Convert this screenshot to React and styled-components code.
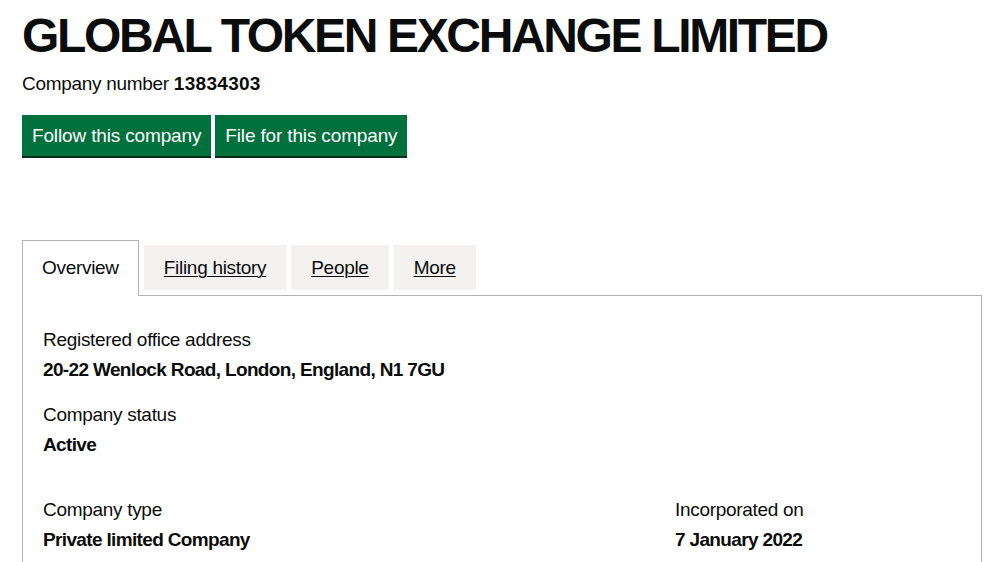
import styled, { createGlobalStyle } from "styled-components";

const GlobalStyle = createGlobalStyle`
  html, body {
    margin: 0;
    padding: 0;
    background: #ffffff;
  }
  body {
    font-family: "Liberation Sans", Arial, sans-serif;
    color: #0b0c0c;
    letter-spacing: -0.3px;
    -webkit-font-smoothing: antialiased;
  }
`;

const Page = styled.main`
  max-width: 960px;
  margin: 0 auto;
  padding-top: 11px;
`;

const Heading = styled.h1`
  margin: 0;
  font-size: 48px;
  line-height: 50px;
  font-weight: 700;
  letter-spacing: -2.35px;
`;

const Lead = styled.p`
  margin: 10px 0 19px;
  font-size: 19px;
  line-height: 25px;

  strong {
    font-weight: 700;
    letter-spacing: 0.3px;
  }
`;

const ButtonRow = styled.div`
  display: flex;
  gap: 4px;
  margin-bottom: 84px;
`;

const Button = styled.a`
  display: inline-block;
  padding: 9px 10px 9px;
  background: #00703c;
  color: #ffffff;
  font-size: 19px;
  line-height: 23px;
  letter-spacing: -0.15px;
  text-decoration: none;
  box-shadow: 0 2px 0 #002d18;
  cursor: pointer;
`;

const TabList = styled.ul`
  display: flex;
  align-items: flex-start;
  list-style: none;
  margin: 0;
  padding: 0;
`;

const Tab = styled.li`
  margin: ${(p) => (p.$selected ? "0 5px -1px 0" : "5px 5px 0 0")};
  padding: ${(p) => (p.$selected ? "14px 19px 16px" : "10px 20px")};
  background: ${(p) => (p.$selected ? "#ffffff" : "#f3f2f1")};
  border: ${(p) => (p.$selected ? "1px solid #b1b4b6" : "0")};
  border-bottom: 0;
  position: relative;
  font-size: 19px;
  line-height: 25px;

  a {
    color: #0b0c0c;
    text-decoration: ${(p) => (p.$selected ? "none" : "underline")};
    text-underline-offset: 2px;
    text-decoration-thickness: 1px;
  }
`;

const Panel = styled.section`
  border: 1px solid #b1b4b6;
  padding: 31px 20px 20px;
`;

const Row = styled.div`
  display: flex;
  margin: 0 -15px;
`;

const Column = styled.div`
  box-sizing: border-box;
  width: ${(p) => p.$width};
  padding: 0 15px;
`;

const Field = styled.dl`
  margin: 0 0 ${(p) => p.$gap || "20px"};
`;

const Label = styled.dt`
  font-size: 19px;
  line-height: 25px;
  margin-bottom: 5px;
`;

const Value = styled.dd`
  margin: 0;
  font-size: 19px;
  line-height: 25px;
  font-weight: 700;
  letter-spacing: -0.65px;
`;

const tabs = [
  { name: "Overview", selected: true },
  { name: "Filing history" },
  { name: "People" },
  { name: "More" },
];

export default function App() {
  return (
    <>
      <GlobalStyle />
      <Page>
        <Heading>GLOBAL TOKEN EXCHANGE LIMITED</Heading>
        <Lead>
          Company number <strong>13834303</strong>
        </Lead>
        <ButtonRow>
          <Button>Follow this company</Button>
          <Button>File for this company</Button>
        </ButtonRow>

        <TabList>
          {tabs.map((t) => (
            <Tab key={t.name} $selected={t.selected}>
              <a>{t.name}</a>
            </Tab>
          ))}
        </TabList>
        <Panel>
          <Field>
            <Label>Registered office address</Label>
            <Value>20-22 Wenlock Road, London, England, N1 7GU</Value>
          </Field>
          <Field $gap="40px">
            <Label>Company status</Label>
            <Value>Active</Value>
          </Field>
          <Row>
            <Column $width="66.666%">
              <Field>
                <Label>Company type</Label>
                <Value>Private limited Company</Value>
              </Field>
            </Column>
            <Column $width="33.333%">
              <Field>
                <Label>Incorporated on</Label>
                <Value>7 January 2022</Value>
              </Field>
            </Column>
          </Row>
        </Panel>
      </Page>
    </>
  );
}
